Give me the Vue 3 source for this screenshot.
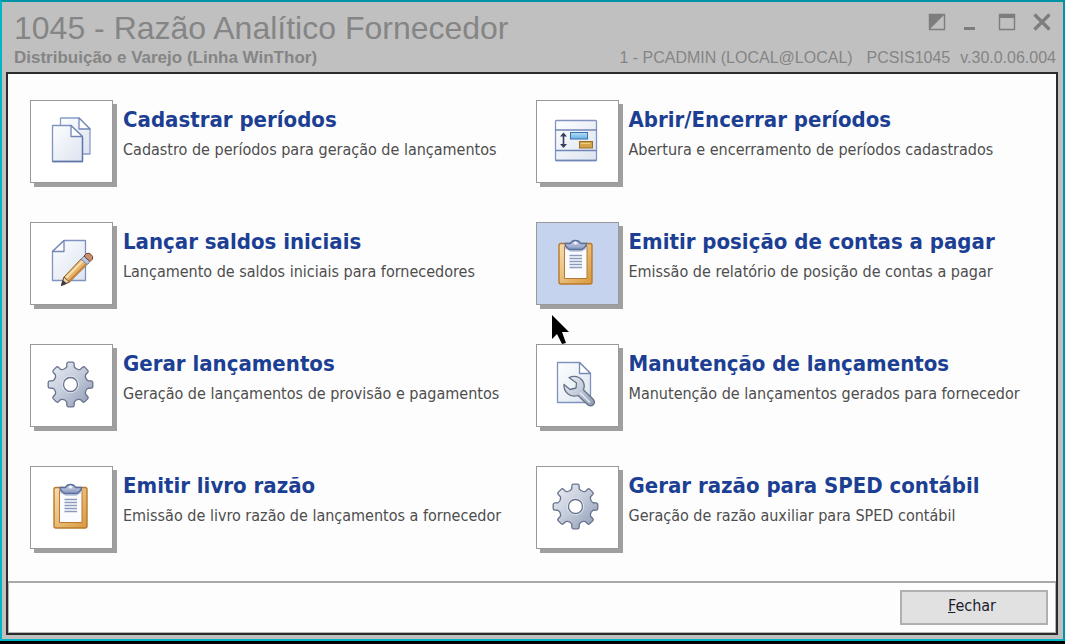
<script setup>
const routines = [
  { icon: 'pages', title: 'Cadastrar períodos', text: 'Cadastro de períodos para geração de lançamentos' },
  { icon: 'schedule', title: 'Abrir/Encerrar períodos', text: 'Abertura e encerramento de períodos cadastrados' },
  { icon: 'edit', title: 'Lançar saldos iniciais', text: 'Lançamento de saldos iniciais para fornecedores' },
  { icon: 'clipboard', title: 'Emitir posição de contas a pagar', text: 'Emissão de relatório de posição de contas a pagar', active: true },
  { icon: 'gear', title: 'Gerar lançamentos', text: 'Geração de lançamentos de provisão e pagamentos' },
  { icon: 'wrench', title: 'Manutenção de lançamentos', text: 'Manutenção de lançamentos gerados para fornecedor' },
  { icon: 'clipboard', title: 'Emitir livro razão', text: 'Emissão de livro razão de lançamentos a fornecedor' },
  { icon: 'gear', title: 'Gerar razão para SPED contábil', text: 'Geração de razão auxiliar para SPED contábil' },
]

function polar(radius, degrees) {
  const a = (degrees * Math.PI) / 180
  return `${(23.5 + radius * Math.cos(a)).toFixed(2)} ${(23.5 + radius * Math.sin(a)).toFixed(2)}`
}

function gearOutline() {
  let d = ''
  for (let i = 0; i < 8; i++) {
    const a = i * 45
    d += `${i ? 'L' : 'M'}${polar(18, a - 12)} L${polar(21, a - 10)} Q${polar(22.6, a - 9)} ${polar(22.4, a - 5)} `
    d += `L${polar(22.4, a + 5)} Q${polar(22.6, a + 9)} ${polar(21, a + 10)} L${polar(18, a + 12)} `
    d += `Q${polar(15.4, a + 22.5)} ${polar(18, a + 33)} `
  }
  return d + 'Z'
}
const gearPath = gearOutline()
</script>

<template>
  <div class="screen">
    <div class="window">
      <header class="titlebar">
        <div class="title-row">
          <h1>1045 - Razão Analítico Fornecedor</h1>
          <div class="controls">
            <button type="button" aria-label="Alternar">
              <svg width="18" height="18" viewBox="0 0 18 18"><path d="M1.500 1.500H16.500V16.500H1.500Z" fill="none" stroke="#7d7d7d" stroke-width="1.4" /><path d="M1 1H17L1 17Z" fill="#7d7d7d" /></svg>
            </button>
            <button type="button" aria-label="Minimizar">
              <svg width="18" height="18" viewBox="0 0 18 18"><path d="M1 14H12V17H1Z" fill="#7d7d7d" /></svg>
            </button>
            <button type="button" aria-label="Maximizar">
              <svg width="18" height="18" viewBox="0 0 18 18"><path d="M1.500 1.500H16.500V16.500H1.500Z" fill="none" stroke="#7d7d7d" stroke-width="1.4" /><path d="M1 1H17V5H1Z" fill="#7d7d7d" /></svg>
            </button>
            <button type="button" aria-label="Fechar janela">
              <svg width="18" height="18" viewBox="0 0 18 18"><path d="M1.500 1.500L16.500 16.500M16.500 1.500L1.500 16.500" stroke="#7d7d7d" stroke-width="3.2" /></svg>
            </button>
          </div>
        </div>
        <div class="info-row">
          <strong>Distribuição e Varejo (Linha WinThor)</strong>
          <div class="session">
            <span class="user">1 - PCADMIN (LOCAL@LOCAL)</span>
            <span>PCSIS1045</span>
            <span>v.30.0.06.004</span>
          </div>
        </div>
      </header>

      <main class="frame">
        <svg class="defs" width="0" height="0" aria-hidden="true">
          <defs>
            <linearGradient id="paper" x1="0" y1="0" x2="1" y2="1">
              <stop offset="0" stop-color="#fdfeff" /><stop offset="1" stop-color="#dce4f0" />
            </linearGradient>
            <linearGradient id="steel" x1="0" y1="0" x2="1" y2="1">
              <stop offset="0" stop-color="#eef1f6" /><stop offset="0.5" stop-color="#c3cbda" /><stop offset="1" stop-color="#8b97b2" />
            </linearGradient>
            <linearGradient id="wood" x1="0" y1="0" x2="1" y2="1">
              <stop offset="0" stop-color="#f6ddb0" /><stop offset="1" stop-color="#d99a3c" />
            </linearGradient>
            <linearGradient id="clip" x1="0" y1="0" x2="0" y2="1">
              <stop offset="0" stop-color="#d5dcec" /><stop offset="1" stop-color="#8494bd" />
            </linearGradient>
            <linearGradient id="sky" x1="0" y1="0" x2="0" y2="1">
              <stop offset="0" stop-color="#b4e0f7" /><stop offset="1" stop-color="#68afe0" />
            </linearGradient>
          </defs>
        </svg>

        <ul class="routines">
          <li v-for="item in routines" :key="item.title">
            <button type="button" class="routine" :class="{ active: item.active }">
              <span class="tile">
                <svg width="48" height="48" viewBox="0 0 48 48" aria-hidden="true">
                  <g v-if="item.icon === 'pages'" stroke-width="1.300" stroke-linejoin="round">
                    <path d="M13.500 1H32L43 12V37H13.500Z" fill="url(#paper)" stroke="#8b9dc6" />
                    <path d="M32 1V12H43Z" fill="#fff" stroke="#7388b8" />
                    <path d="M5.500 8.500H24L35.500 19.500V44.500H5.500Z" fill="url(#paper)" stroke="#8093bf" />
                    <path d="M24 8.500V19.500H35.500Z" fill="#fff" stroke="#7085b5" />
                    <path d="M5.500 44.500H35.500V20" fill="none" stroke="#5f75a8" />
                  </g>
                  <g v-else-if="item.icon === 'schedule'">
                    <rect x="3.500" y="3.500" width="41" height="40" rx="1" fill="url(#paper)" stroke="#8194c0" stroke-width="1.300" />
                    <path d="M3.500 13H44.500M3.500 33.500H44.500M3.500 43.500H44.500" stroke="#7186b6" stroke-width="1.400" />
                    <path d="M11.500 18V29" stroke="#35405f" stroke-width="1.600" />
                    <path d="M8 19.500L11.500 15.500L15 19.500ZM8 27L11.500 31L15 27Z" fill="#35405f" />
                    <rect x="18.500" y="15.500" width="17" height="6.500" fill="url(#sky)" stroke="#3d72ad" />
                    <rect x="27.500" y="24.500" width="13" height="6.500" fill="#d6a448" stroke="#98702c" />
                    <path d="M29 26.500H38" stroke="#efcf85" />
                  </g>
                  <g v-else-if="item.icon === 'edit'" stroke-linejoin="round">
                    <path d="M17 1.500H38.500V41.500H5.500V12.500Z" fill="url(#paper)" stroke="#8093bf" stroke-width="1.300" />
                    <path d="M17 1.500V12.500H5.500Z" fill="#fff" stroke="#7488b7" stroke-width="1.300" />
                    <path d="M14.500 46.500L17 38L35.500 18.500L41.500 24L22.500 43Z" fill="#e6b36b" stroke="#966124" />
                    <path d="M19 39L37 20.500" stroke="#f7dfad" stroke-width="2" />
                    <path d="M22 42L40.500 23.500" stroke="#c88538" stroke-width="1.500" />
                    <path d="M14.500 46.500L17 38L22.500 43Z" fill="#ecd2aa" stroke="#72512e" />
                    <path d="M14 47L15.500 41L20 44.500Z" fill="#3f3c43" />
                    <path d="M34 20L37 17L43 22.500L40 25.500Z" fill="#b9c6df" stroke="#7385aa" />
                    <path d="M37 17L39.500 14.500Q42 13.500 44 15.500Q46.500 17.500 45.500 20L43 22.500Z" fill="#c99072" stroke="#6d4034" />
                  </g>
                  <g v-else-if="item.icon === 'clipboard'" stroke-linejoin="round">
                    <rect x="7" y="4.500" width="33" height="40.500" rx="2" fill="url(#wood)" stroke="#b9792b" stroke-width="1.400" />
                    <path d="M12.500 7.500H35V39.500H12.500Z" fill="#fbfcff" stroke="#b87833" />
                    <path d="M13 8H34.500V10L29 13H19L13 10Z" fill="#c5cfe4" />
                    <path d="M17.500 16.500H30M17.500 19.500H30M17.500 22.500H30M17.500 25.500H30M17.500 28.500H30" stroke="#8c9abe" stroke-width="1.400" />
                    <path d="M13 4.500H18.500Q20 1.500 23.500 1.500Q27 1.500 28.500 4.500H34.500Q34.500 7.500 30 10.500H17.500Q13 7.500 13 4.500Z" fill="url(#clip)" stroke="#5b6f9f" stroke-width="1.500" />
                    <circle cx="23.500" cy="4" r="1.500" fill="#f4f6fc" />
                  </g>
                  <g v-else-if="item.icon === 'gear'" stroke="#68738d" stroke-width="1.300">
                    <path :d="gearPath" fill="url(#steel)" stroke-linejoin="round" />
                    <circle cx="23.500" cy="23.500" r="8" fill="none" stroke="#e2e6ee" />
                    <circle cx="23.500" cy="23.500" r="7" fill="#fff" />
                  </g>
                  <g v-else stroke-linejoin="round" stroke-width="1.300">
                    <path d="M5.500 1.500H27.500L38.500 12.500V41.500H5.500Z" fill="url(#paper)" stroke="#8093bf" />
                    <path d="M27.500 1.500V12.500H38.500Z" fill="#fff" stroke="#7488b7" />
                    <path d="M17 16.500Q25 13.500 30 19Q33.500 23.500 31.500 29L41 38Q43.500 41 41.500 43.500Q39 46 36 44L26 34.500Q20 36.500 15.500 32.500Q11.500 28.500 12 23.500L18 28.500L24 27L24.500 22Z" fill="url(#steel)" stroke="#667188" />
                    <path d="M28 31.500L38 41.500" stroke="#e3e8f1" stroke-width="1.500" />
                  </g>
                </svg>
                <svg v-if="item.active" class="cursor" width="20" height="30" viewBox="0 0 20 30" aria-hidden="true">
                  <path d="M1 0L18 17H11L15 28L11 29L6 19L1 24Z" fill="#000" />
                </svg>
              </span>
              <span class="label">
                <span class="name">{{ item.title }}</span>
                <span class="text">{{ item.text }}</span>
              </span>
            </button>
          </li>
        </ul>

        <footer class="footer">
          <button type="button" class="close"><u>F</u>echar</button>
        </footer>
      </main>
    </div>
  </div>
</template>

<style>
body {
  margin: 0;
}
</style>

<style scoped>
* {
  box-sizing: border-box;
}
button {
  font: inherit;
  color: inherit;
}
.screen {
  display: flex;
  flex-direction: column;
  min-height: 100vh;
  padding-bottom: 3px;
  background: #000;
}
.window {
  flex: 1;
  display: flex;
  flex-direction: column;
  padding: 0 5px 4px 4px;
  background: #c0c0c0;
  border: 2px solid #00b4c8;
  border-top-color: #0093a5;
  border-right-color: #0093a5;
  font-family: "Liberation Sans", Arial, sans-serif;
  color: #858585;
}
.titlebar {
  height: 70px;
  padding: 8px 2px 0 8px;
}
.title-row,
.info-row {
  display: flex;
  justify-content: space-between;
}
h1 {
  margin: 0;
  font-size: 32px;
  line-height: 36px;
  font-weight: 400;
}
.controls {
  display: flex;
  gap: 17px;
  padding: 3px 5px 0 0;
}
.controls button {
  width: 18px;
  height: 18px;
  padding: 0;
  border: 0;
  background: none;
}
.controls svg {
  display: block;
}
.info-row {
  font-size: 17px;
  line-height: 24px;
}
.session {
  display: flex;
  gap: 10px;
  font-size: 16px;
}
.user {
  padding-right: 4px;
}
.frame {
  flex: 1;
  display: flex;
  flex-direction: column;
  background: #fdfdfd;
  border: 2px solid #2b2b2b;
  color: #4d4d4d;
}
.defs {
  position: absolute;
}
.routines {
  flex: 1;
  display: grid;
  grid-template-columns: 1fr 1fr;
  align-content: start;
  row-gap: 39px;
  margin: 0;
  padding: 26px 15px 0 22px;
  list-style: none;
}
.routine {
  display: flex;
  gap: 10px;
  width: 100%;
  padding: 0;
  border: 0;
  background: none;
  text-align: left;
}
.tile {
  position: relative;
  flex: none;
  display: grid;
  place-items: center;
  width: 83px;
  height: 83px;
  padding: 0 2px 2px 0;
  background: #fff;
  border: 1px solid #999;
  box-shadow: 4px 4px 0 #9f9f9f;
}
.active .tile {
  z-index: 1;
  background: #c5d3ef;
}
.cursor {
  position: absolute;
  left: 14px;
  top: 92px;
}
.label {
  padding-top: 6px;
  white-space: nowrap;
}
.name,
.text {
  display: block;
}
.name {
  font: 700 22px/28px "DejaVu Sans Condensed", "DejaVu Sans", sans-serif;
  color: #1c3f94;
}
.text {
  padding-top: 4px;
  font: 400 16px/24px "DejaVu Sans Condensed", "DejaVu Sans", sans-serif;
}
.footer {
  display: flex;
  justify-content: flex-end;
  padding: 7px;
  border: 1px solid #b5b5b5;
  border-top: 2px solid #a9a9a9;
}
.close {
  width: 148px;
  height: 35px;
  padding: 0 4px 4px 0;
  border: 2px solid #b0b0b0;
  background: #e1e1e1;
  color: #1c1c2c;
  font: 400 16px/24px "DejaVu Sans Condensed", "DejaVu Sans", sans-serif;
}
</style>
